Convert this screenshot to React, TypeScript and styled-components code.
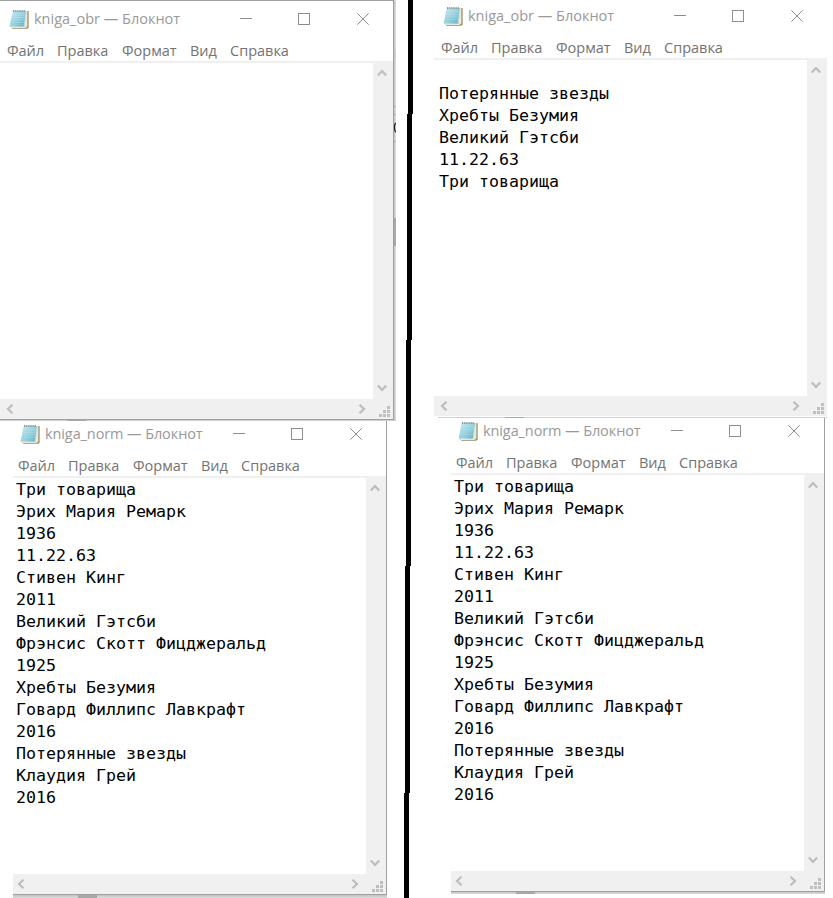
import React from "react";
import styled, { createGlobalStyle } from "styled-components";

const GlobalStyle = createGlobalStyle`
  * { box-sizing: border-box; }
  html, body { margin: 0; background: #fff; overflow: hidden; }
`;

const Page = styled.main`
  display: grid;
  grid-template-columns: 404px 9px 420px;
  width: 833px;
  height: 898px;
  overflow: hidden;
  background: #fff;
`;

const Column = styled.div`
  display: flex;
  flex-direction: column;
  align-items: flex-start;
  min-width: 0;
`;

const WindowRow = styled.div<{ $indent: number; $height: number; $gap?: number }>`
  display: flex;
  height: ${(p) => p.$height}px;
  margin-bottom: ${(p) => p.$gap ?? 0}px;
  padding-left: ${(p) => p.$indent}px;
`;

const Frame = styled.section<{ $width: number; $top?: boolean; $right?: boolean; $bottom?: boolean }>`
  display: flex;
  flex-direction: column;
  width: ${(p) => p.$width}px;
  height: 100%;
  background: #fff;
  border: 0 solid #a0a0a0;
  border-top-width: ${(p) => (p.$top ? 1 : 0)}px;
  border-right-width: ${(p) => (p.$right ? 1 : 0)}px;
  border-bottom-width: ${(p) => (p.$bottom ? 1 : 0)}px;
`;

const TitleBar = styled.header<{ $height: number; $pad: number; $end: number }>`
  display: flex;
  align-items: flex-end;
  flex: none;
  height: ${(p) => p.$height}px;
  padding: 0 ${(p) => p.$end}px 0 ${(p) => p.$pad}px;
`;

const Title = styled.span<{ $spacing: number }>`
  flex: 1;
  height: 21px;
  padding-left: 5px;
  font: 14.5px/20px "Open Sans", "Noto Sans", sans-serif;
  letter-spacing: ${(p) => p.$spacing}px;
  white-space: nowrap;
  color: #999;
`;

const Controls = styled.div`
  display: grid;
  grid-template-columns: 58px 59px 12px;
  height: 20px;
  padding-top: 3px;
`;

const ControlIcon = styled.svg`
  display: block;
  width: 12px;
  height: 12px;
  fill: none;
  stroke: #8e8e8e;
`;

const MenuBar = styled.nav<{ $pad: number }>`
  display: flex;
  flex: none;
  height: 33px;
  padding: 11px 0 0 ${(p) => p.$pad}px;
  border-bottom: 2px solid #f0f0f0;
`;

const MenuItem = styled.span<{ $width: number }>`
  flex: none;
  width: ${(p) => p.$width}px;
  height: 20px;
  font: 14.5px/20px "Open Sans", "Noto Sans", sans-serif;
  white-space: nowrap;
  color: #737373;
`;

const Body = styled.div`
  display: flex;
  flex: 1;
  min-height: 0;
`;

const Document = styled.pre<{ $pad: number }>`
  flex: 1;
  margin: 0;
  padding: 1px 0 0 ${(p) => p.$pad}px;
  font: 16.61px/22px "DejaVu Sans Mono", monospace;
  color: #000;
`;

const VerticalScroll = styled.div`
  display: flex;
  flex-direction: column;
  justify-content: space-between;
  width: 20px;
  padding: 6px 0 7px 4px;
  background: #f0f0f0;
`;

const HorizontalScroll = styled.div<{ $pad: number }>`
  display: flex;
  align-items: center;
  flex: none;
  height: 20px;
  padding: 0 3px 0 ${(p) => p.$pad}px;
  background: #f0f0f0;
`;

const Spacer = styled.div`
  flex: 1;
`;

const Chevron = styled.svg`
  display: block;
  fill: none;
  stroke: #bdbdbd;
  stroke-width: 2.2;
`;

const Grip = styled.svg`
  display: block;
  width: 11px;
  height: 11px;
  margin: 5px 0 0 13px;
  fill: #bfbfbf;
`;

const SideShadow = styled.div`
  width: 2px;
  height: 100%;
  overflow: hidden;
`;

const BottomShadow = styled.div<{ $width: number; $height: number; $indent: number; $dark: number }>`
  width: ${(p) => p.$width}px;
  height: ${(p) => p.$height}px;
  margin-left: ${(p) => p.$indent}px;
  padding-left: ${(p) => p.$dark}px;
  background: linear-gradient(#c2c2c2, #dedede);
`;

const TaskMark = styled.div`
  width: 19px;
  height: 100%;
  background: #a8a8a8;
`;

const Divider = styled.div`
  display: flex;
  flex-direction: column;
`;

const Stroke = styled.div<{ $offset: number; $height: number }>`
  width: 5px;
  height: ${(p) => p.$height}px;
  margin-left: ${(p) => p.$offset}px;
  background: #000;
`;

const IconDrawing = styled.svg`
  display: block;
  flex: none;
  width: 20px;
  height: 20px;
  margin: 0 0 1px -1px;
`;

const NotepadIcon = ({ id }: { id: string }) => (
  <IconDrawing viewBox="0 0 20 20">
    <defs>
      <linearGradient id={id} x1="0" y1="0" x2="1" y2="1">
        <stop offset="0" stopColor="#c9edf4" />
        <stop offset="0.55" stopColor="#91cddb" />
        <stop offset="1" stopColor="#55a9bd" />
      </linearGradient>
    </defs>
    <path d="M5 2H19.6V18.8L18 19.8H3.5L2 18Z" fill="#9b8862" />
    <path d="M5 2H18.4V17.5L16.5 19H3L1 17.5Z" fill="#eee9d8" />
    <path d="M3.7 2.2H17.2L15.6 18H.5Z" fill={`url(#${id})`} />
    <path d="M4.5 6H15.8M4 8.5H15.5M3.5 11H15.2M3 13.5H15M2.5 16H14.5" stroke="#d7f1f5" strokeWidth=".7" opacity=".4" />
    <path d="M.5 17.7L15 18.1L17.3 4" fill="none" stroke="#d7eef0" strokeWidth=".8" />
    <path d="M4.7 3V1M6.8 3V1M8.9 3V1M11 3V1M13.1 3V1M15.2 3V1" stroke="#62777b" strokeWidth=".9" />
  </IconDrawing>
);

const menu = [
  { label: "Файл", width: 50 },
  { label: "Правка", width: 65 },
  { label: "Формат", width: 68 },
  { label: "Вид", width: 40 },
  { label: "Справка", width: 60 },
];

interface NotepadProps {
  id: string;
  name: string;
  text: string;
  width: number;
  titleHeight: number;
  titleSpacing: number;
  iconPad: number;
  titleEnd: number;
  menuPad: number;
  textPad: number;
  scrollPad: number;
  top?: boolean;
  right?: boolean;
  bottom?: boolean;
}

const Notepad = (p: NotepadProps) => (
  <Frame $width={p.width} $top={p.top} $right={p.right} $bottom={p.bottom}>
    <TitleBar $height={p.titleHeight} $pad={p.iconPad} $end={p.titleEnd}>
      <NotepadIcon id={p.id} />
      <Title $spacing={p.titleSpacing}>{p.name} — Блокнот</Title>
      <Controls>
        <ControlIcon><path d="M0 5.5H12" /></ControlIcon>
        <ControlIcon><rect x=".5" y=".5" width="11" height="11" /></ControlIcon>
        <ControlIcon><path d="M.3.3L11.7 11.7M11.7.3L.3 11.7" /></ControlIcon>
      </Controls>
    </TitleBar>
    <MenuBar $pad={p.menuPad}>
      {menu.map((m) => (
        <MenuItem key={m.label} $width={m.width}>{m.label}</MenuItem>
      ))}
    </MenuBar>
    <Body>
      <Document $pad={p.textPad}>{p.text}</Document>
      <VerticalScroll>
        <Chevron width="10" height="8"><path d="M.8 6.5L5 2L9.2 6.5" /></Chevron>
        <Chevron width="10" height="8"><path d="M.8 1.5L5 6L9.2 1.5" /></Chevron>
      </VerticalScroll>
    </Body>
    <HorizontalScroll $pad={p.scrollPad}>
      <Chevron width="8" height="10"><path d="M6.5.8L2 5L6.5 9.2" /></Chevron>
      <Spacer />
      <Chevron width="8" height="10"><path d="M1.5.8L6 5L1.5 9.2" /></Chevron>
      <Grip><path d="M8 0h3v3H8zM4 4h3v3H4zM8 4h3v3H8zM0 8h3v3H0zM4 8h3v3H4zM8 8h3v3H8z" /></Grip>
    </HorizontalScroll>
  </Frame>
);

const library = `Три товарища
Эрих Мария Ремарк
1936
11.22.63
Стивен Кинг
2011
Великий Гэтсби
Фрэнсис Скотт Фицджеральд
1925
Хребты Безумия
Говард Филлипс Лавкрафт
2016
Потерянные звезды
Клаудия Грей
2016`;

const titles = `
Потерянные звезды
Хребты Безумия
Великий Гэтсби
11.22.63
Три товарища`;

export default function App() {
  return (
    <>
      <GlobalStyle />
      <Page>
        <Column>
          <WindowRow $indent={0} $height={420}>
            <Notepad id="paper1" name="kniga_obr" text="" width={394} titleHeight={29} titleSpacing={0} iconPad={10} titleEnd={24} menuPad={7} textPad={5} scrollPad={6} top right bottom />
            <SideShadow>
              <svg width="3" height="420">
                <rect width="3" height="420" fill="#dadada" />
                <rect width="1" height="420" fill="#c8c8c8" />
                <path d="M0 106.5H3M0 114.5H3M0 141.5H3" stroke="#b0b0b0" />
                <path d="M1 51h1v7H1z" fill="#d3d29e" />
                <path d="M2.5 123Q.5 123 .5 127.5T2.5 132" fill="none" stroke="#222" strokeWidth="1.3" />
                <path d="M0 218h3v28H0z" fill="#aaa" />
              </svg>
            </SideShadow>
          </WindowRow>
          <BottomShadow $width={396} $height={1} $indent={0} $dark={67}><TaskMark /></BottomShadow>
          <WindowRow $indent={13} $height={474}>
            <Notepad id="paper2" name="kniga_norm" text={library} width={374} titleHeight={24} titleSpacing={-0.1} iconPad={8} titleEnd={24} menuPad={5} textPad={3} scrollPad={4} right bottom />
          </WindowRow>
          <BottomShadow $width={374} $height={3} $indent={13} $dark={65}><TaskMark /></BottomShadow>
        </Column>
        <Divider>
          <Stroke $offset={4} $height={114} />
          <Stroke $offset={3} $height={226} />
          <Stroke $offset={2} $height={226} />
          <Stroke $offset={1} $height={227} />
          <Stroke $offset={0} $height={105} />
        </Divider>
        <Column>
          <WindowRow $indent={21} $height={416} $gap={1}>
            <Notepad id="paper3" name="kniga_obr" text={"\n" + titles.slice(1)} width={393} titleHeight={27} titleSpacing={0} iconPad={10} titleEnd={24} menuPad={7} textPad={5} scrollPad={6} />
          </WindowRow>
          <BottomShadow $width={389} $height={1} $indent={25} $dark={67}><TaskMark /></BottomShadow>
          <WindowRow $indent={38} $height={474}>
            <Notepad id="paper4" name="kniga_norm" text={library} width={374} titleHeight={24} titleSpacing={-0.1} iconPad={8} titleEnd={24} menuPad={5} textPad={3} scrollPad={4} right bottom />
          </WindowRow>
          <BottomShadow $width={374} $height={2} $indent={38} $dark={65}><TaskMark /></BottomShadow>
        </Column>
      </Page>
    </>
  );
}
